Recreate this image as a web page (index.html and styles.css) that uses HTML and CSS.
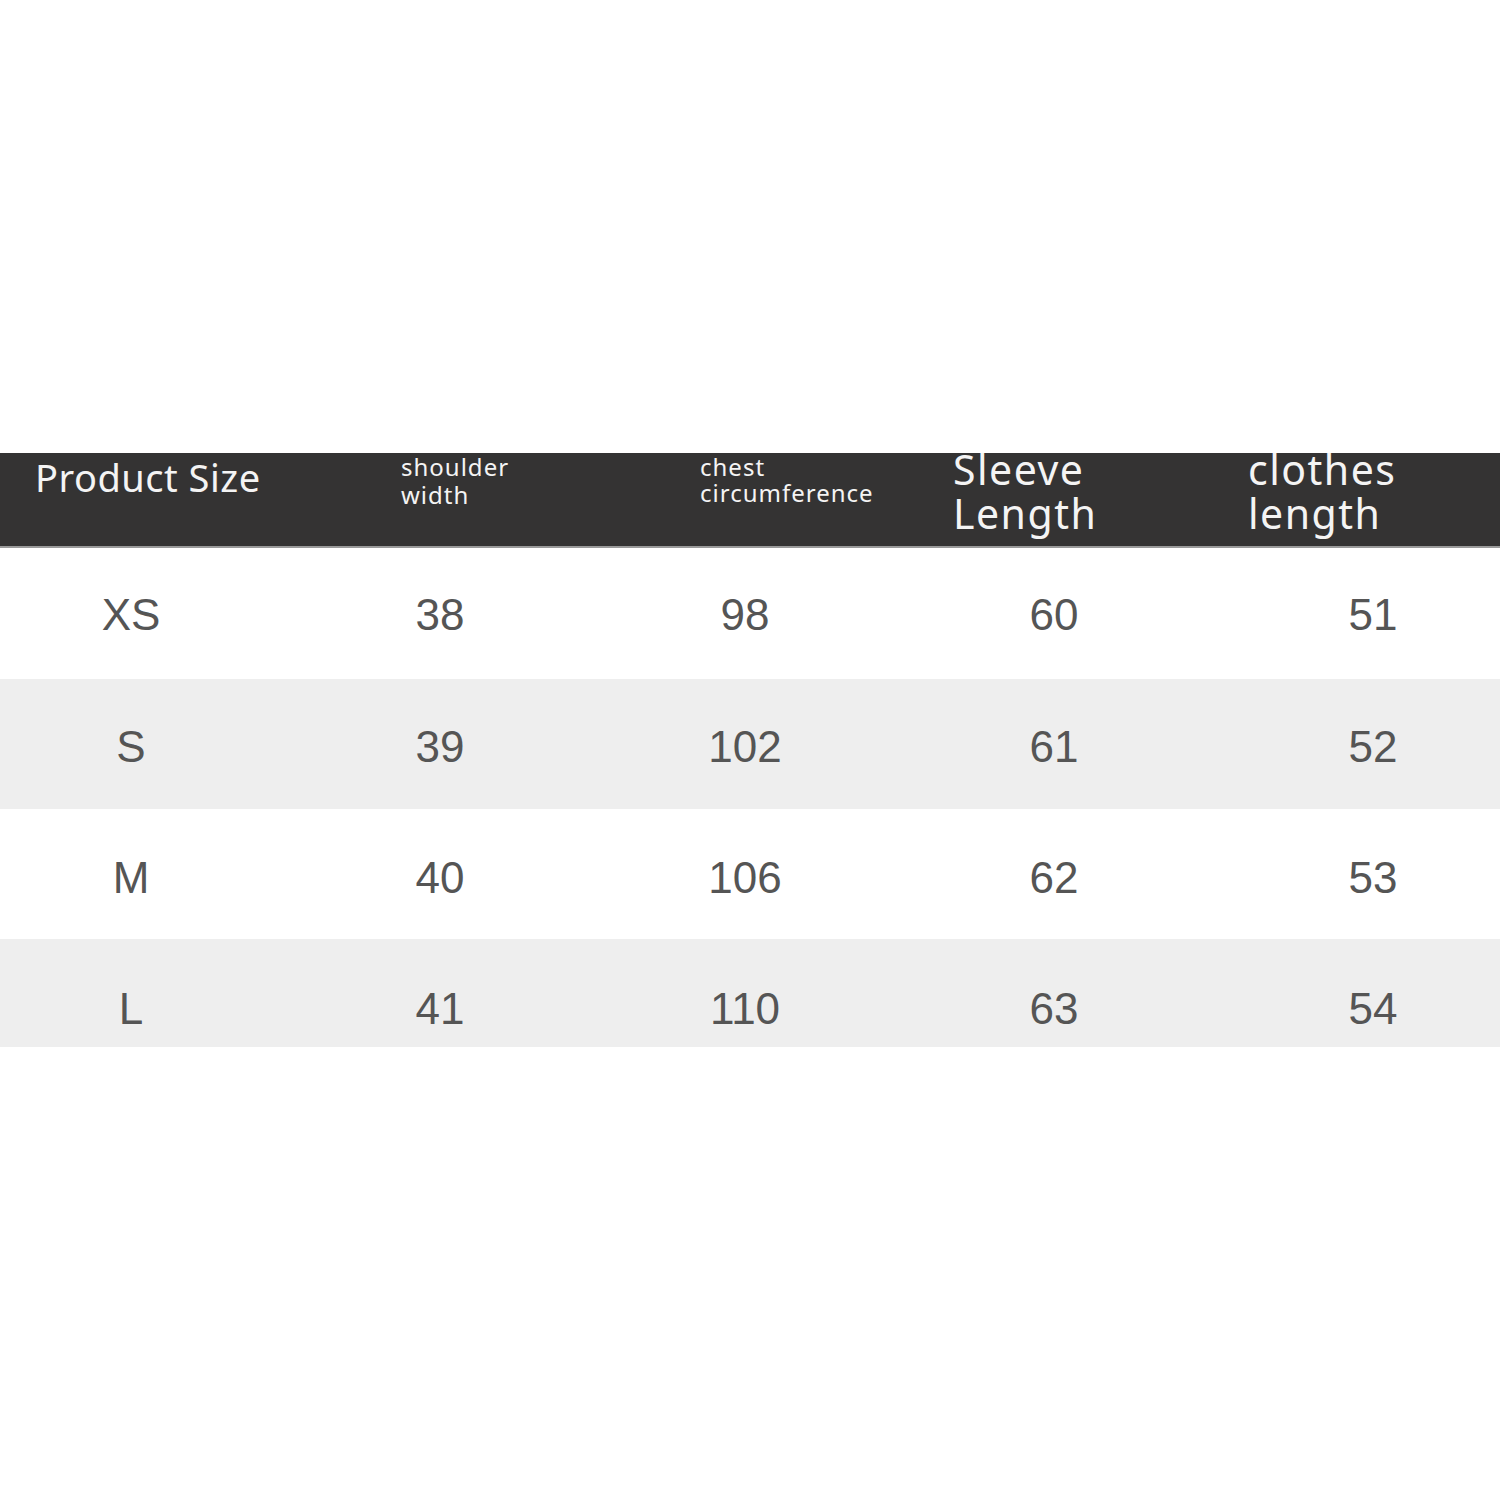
FILE: index.html
```html
<!DOCTYPE html>
<html>
<head>
<meta charset="utf-8">
<link rel="stylesheet" href="styles.css">
</head>
<body>
<div class="page">
  <div class="table">
    <div class="head">
      <div class="hcell h1">Product Size</div>
      <div class="hcell h2">shoulder<br>width</div>
      <div class="hcell h3">chest<br>circumference</div>
      <div class="hcell h4">Sleeve<br>Length</div>
      <div class="hcell h5">clothes<br>length</div>
    </div>
    <div class="row r1 white">
      <div class="cell">XS</div><div class="cell">38</div><div class="cell">98</div><div class="cell">60</div><div class="cell">51</div>
    </div>
    <div class="row r2 grey">
      <div class="cell">S</div><div class="cell">39</div><div class="cell">102</div><div class="cell">61</div><div class="cell">52</div>
    </div>
    <div class="row r3 white">
      <div class="cell">M</div><div class="cell">40</div><div class="cell">106</div><div class="cell">62</div><div class="cell">53</div>
    </div>
    <div class="row r4 grey">
      <div class="cell">L</div><div class="cell">41</div><div class="cell">110</div><div class="cell">63</div><div class="cell">54</div>
    </div>
  </div>
</div>
</body>
</html>
```

FILE: styles.css
```css
html, body {
  margin: 0;
  padding: 0;
  background: #ffffff;
}
.page {
  width: 1500px;
  height: 1500px;
  padding-top: 453px;
  box-sizing: border-box;
}
.table {
  display: flex;
  flex-direction: column;
}
.head {
  display: grid;
  grid-template-columns: 401px 299px 253px 295px 252px;
  height: 93px;
  background: #343333;
  border-bottom: 2px solid #9a9a9a;
  color: #f4f4f4;
  font-family: "Noto Sans", "Open Sans", sans-serif;
  overflow: hidden;
}
.hcell {
  white-space: nowrap;
}
.h1 {
  padding-left: 35px;
  padding-top: 2px;
  font-size: 38px;
  line-height: 44px;
  letter-spacing: 0.5px;
}
.h2 {
  padding-top: 0px;
  font-size: 24px;
  line-height: 28px;
  letter-spacing: 1px;
}
.h3 {
  padding-top: 1px;
  font-size: 24px;
  line-height: 26px;
  letter-spacing: 1px;
}
.h4, .h5 {
  padding-top: 0px;
  margin-top: -6px;
  font-size: 41px;
  line-height: 44px;
  letter-spacing: 1.5px;
}
.row {
  display: grid;
  grid-template-columns: 262px 356px 254px 364px 264px;
  font-family: "Liberation Sans", Arial, sans-serif;
  font-size: 44px;
  color: #555555;
  overflow: hidden;
}
.white { background: #ffffff; }
.grey { background: #eeeeee; }
.r1 { height: 131px; padding-top: 42px; box-sizing: border-box; }
.r2 { height: 130px; padding-top: 43px; box-sizing: border-box; }
.r3 { height: 130px; padding-top: 44px; box-sizing: border-box; }
.r4 { height: 108px; padding-top: 45px; box-sizing: border-box; }
.cell {
  text-align: center;
  line-height: 50px;
  height: 50px;
}
.cell:nth-child(5) {
  padding-left: 10px;
}
```
